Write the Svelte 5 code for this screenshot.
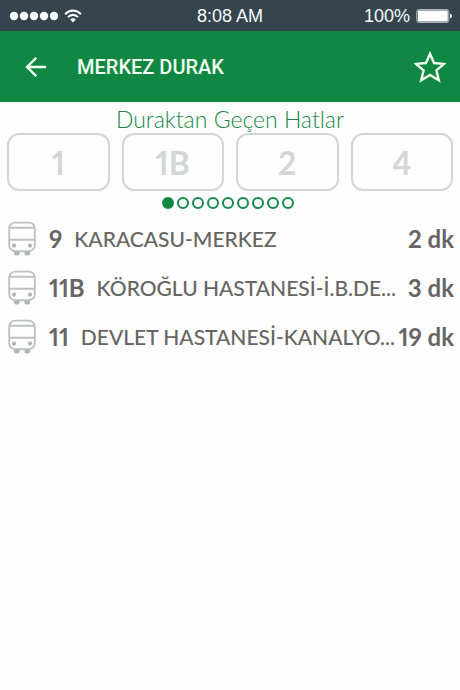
<script>
  const lines = ['1', '1B', '2', '4'];
  const pages = [1, 2, 3, 4, 5, 6, 7, 8, 9];
  const arrivals = [
    { line: '9', name: 'KARACASU-MERKEZ', time: '2 dk' },
    { line: '11B', name: 'KÖROĞLU HASTANESİ-İ.B.DE...', time: '3 dk' },
    { line: '11', name: 'DEVLET HASTANESİ-KANALYO...', time: '19 dk' }
  ];
  let page = $state(1);
</script>

<div class="screen">
  <div class="status">
    <div class="signal">
      <svg width="50" height="10" viewBox="0 0 50 10" fill="#fff" aria-hidden="true">
        {#each [6, 16, 26, 36, 46] as x}
          <circle cx={x} cy="5" r="4.2" />
        {/each}
      </svg>
      <svg width="18" height="14" viewBox="0 0 18 14" fill="none" stroke="#fff" stroke-width="2.1" aria-hidden="true">
        <path d="M1.2 5.2C5.6 .4 12.4 .4 16.8 5.2M4 8.1C6.8 5.1 11.2 5.1 14 8.1" />
        <path d="M6.2 10.4Q9 8 11.8 10.4L9 13.5Z" fill="#fff" stroke="none" />
      </svg>
    </div>
    <span>8:08 AM</span>
    <div class="battery">
      <span>100%</span>
      <svg width="36" height="14" viewBox="0 0 36 14" aria-hidden="true">
        <rect x=".8" y=".6" width="32" height="12.8" rx="2" fill="none" stroke="#b9c3c7" />
        <rect x="1.8" y="1.6" width="30" height="10.8" rx="1" fill="#fff" />
        <path d="M34 4.8Q36 5.2 36 7T34 9.2Z" fill="#fff" />
      </svg>
    </div>
  </div>

  <header>
    <button class="icon" aria-label="Geri">
      <svg width="22" height="22" viewBox="0 0 22 22" fill="none" stroke="#f1fff1" stroke-width="2.4" aria-hidden="true">
        <path d="M21 11H2.4M11.2 1.8L2 11L11.2 20.2" />
      </svg>
    </button>
    <h1>MERKEZ DURAK</h1>
    <button class="icon" aria-label="Favorilere ekle">
      <svg width="32" height="32" viewBox="0 0 32 32" fill="none" stroke="#f1fff1" stroke-width="2.4" aria-hidden="true">
        <path d="M16 2.8L20 12L30 12.9L22.4 19.4L24.8 29.2L16 24L7.2 29.2L9.6 19.4L2 12.9L12 12Z" />
      </svg>
    </button>
  </header>

  <main>
    <h2>Duraktan Geçen Hatlar</h2>
    <div class="lines">
      {#each lines as line}
        <button>{line}</button>
      {/each}
    </div>
    <div class="dots">
      {#each pages as p}
        <button class:active={p === page} aria-label={`Sayfa ${p}`} onclick={() => (page = p)}></button>
      {/each}
    </div>
    <ul>
      {#each arrivals as a}
        <li>
          <svg width="28" height="36" viewBox="0 0 28 36" fill="none" stroke="#bfc0c0" stroke-width="1.9" aria-hidden="true">
            <rect x="1.2" y="1.6" width="25.6" height="28.6" rx="6" />
            <path d="M1.2 6.8H26.8M1.2 18.8H26.8" />
            <circle cx="6" cy="24.6" r="2.1" fill="#b2b3b3" stroke="none" />
            <circle cx="22" cy="24.6" r="2.1" fill="#b2b3b3" stroke="none" />
            <path d="M6 30.5H11.5V32.5Q11.5 34.5 8.75 34.5T6 32.5ZM16.5 30.5H22V32.5Q22 34.5 19.25 34.5T16.5 32.5Z" fill="#b2b3b3" stroke="none" />
          </svg>
          <strong>{a.line}</strong>
          <span class="name">{a.name}</span>
          <strong class="time">{a.time}</strong>
        </li>
      {/each}
    </ul>
  </main>
</div>

<style>
  :global(body) {
    margin: 0;
    background: #fefefe;
  }
  .screen {
    min-height: 100vh;
    font-family: Lato, "Open Sans", sans-serif;
    font-variant-numeric: proportional-nums;
    color: #666563;
  }
  button {
    margin: 0;
    padding: 0;
    border: 0;
    background: none;
    font: inherit;
    color: inherit;
    cursor: pointer;
  }
  svg {
    display: block;
    flex: none;
  }
  .status {
    display: grid;
    grid-template-columns: 1fr auto 1fr;
    align-items: center;
    height: 31px;
    padding: 0 8px;
    background: #36454d;
    color: #f5fafb;
    font: 18px/30px "Liberation Sans", Arial, sans-serif;
  }
  .signal,
  .battery {
    display: flex;
    align-items: center;
    gap: 6px;
  }
  .battery {
    justify-content: flex-end;
  }
  header {
    display: flex;
    align-items: center;
    height: 71px;
    padding: 0 14px 0 25px;
    background: #108844;
    color: #f1fff1;
  }
  h1 {
    flex: 1;
    margin: 0 0 0 30px;
    font: 500 20px/28px Roboto, sans-serif;
  }
  h2 {
    margin: 0;
    padding-top: 4px;
    color: #16884a;
    font-size: 23px;
    font-weight: 300;
    line-height: 27px;
    text-align: center;
  }
  .lines {
    display: grid;
    grid-template-columns: repeat(4, 1fr);
    gap: 12px;
    padding: 0 7px;
  }
  .lines button {
    height: 58px;
    border: 2px solid #d1d6d7;
    border-radius: 12px;
    color: #d1d6d7;
    font-size: 32px;
    font-weight: 700;
  }
  .dots {
    display: flex;
    justify-content: center;
    gap: 3px;
    padding: 6px 4px 5px 0;
  }
  .dots button {
    box-sizing: border-box;
    width: 12px;
    height: 12px;
    border: 2px solid #16884a;
    border-radius: 50%;
  }
  .dots .active {
    background: #108844;
  }
  ul {
    margin: 0;
    padding: 0 6px 0 8px;
    list-style: none;
  }
  li {
    display: flex;
    align-items: center;
    height: 49px;
    white-space: nowrap;
  }
  strong {
    margin: 0 12px 0 13px;
    font-size: 24px;
    font-weight: 700;
  }
  .name {
    flex: 1;
    min-width: 0;
    font-size: 21px;
    font-weight: 500;
  }
  .time {
    margin: 0;
  }
</style>
